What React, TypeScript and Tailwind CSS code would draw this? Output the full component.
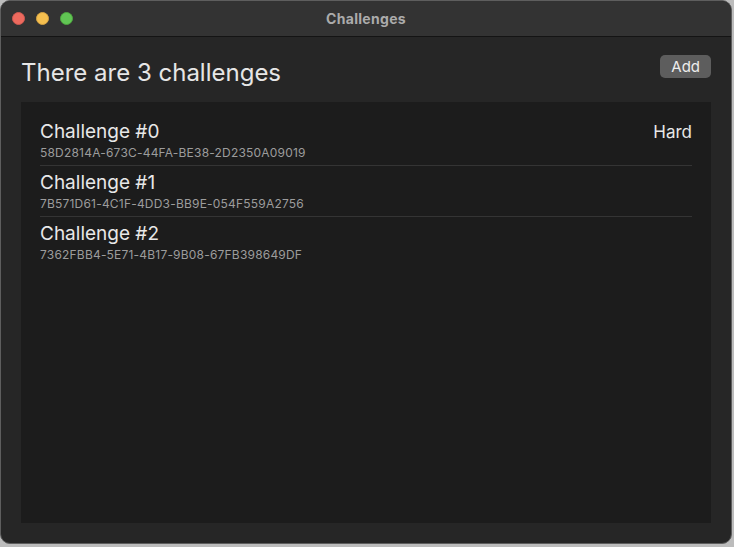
const challenges = [
  { name: "Challenge #0", id: "58D2814A-673C-44FA-BE38-2D2350A09019", level: "Hard" },
  { name: "Challenge #1", id: "7B571D61-4C1F-4DD3-BB9E-054F559A2756" },
  { name: "Challenge #2", id: "7362FBB4-5E71-4B17-9B08-67FB398649DF" },
];

function TrafficLights() {
  return (
    <div className="flex items-center gap-[11px] pl-[11px]">
      <span className="h-[13px] w-[13px] rounded-full border border-[#d05a52] bg-[#ed6a5e]" />
      <span className="h-[13px] w-[13px] rounded-full border border-[#d6a444] bg-[#f5bf4f]" />
      <span className="h-[13px] w-[13px] rounded-full border border-[#4ea73f] bg-[#61c554]" />
    </div>
  );
}

export default function App() {
  return (
    <div
      className="h-[547px] w-[734px] bg-[#bcbcbc] pr-[2px] pb-[3px]"
      style={{ fontFamily: "Inter, 'Noto Sans', sans-serif" }}
    >
      <div className="flex h-full w-full flex-col overflow-hidden rounded-[10px] border border-[#5e5e5e] bg-[#262626]">
        <div className="relative flex h-[36px] shrink-0 items-center border-b border-[#141414] bg-[#333333]">
          <TrafficLights />
          <div className="absolute inset-0 flex items-center justify-center text-[14px] font-bold tracking-[0.3px] text-[#ababab]">
            Challenges
          </div>
        </div>

        <div className="flex flex-1 flex-col px-5 pb-5">
          <div className="flex items-start justify-between pt-[18px] pb-[11px]">
            <h1 className="text-[24px] leading-[36px] text-[#e6e6e6]">
              There are 3 challenges
            </h1>
            <button
              type="button"
              className="rounded-[5px] bg-[#5d5d5d] px-[11px] py-[2px] text-[15px] leading-[19px] text-[#ececec]"
            >
              Add
            </button>
          </div>

          <div className="flex-1 bg-[#1c1c1c] px-[19px] pt-[13px]">
            {challenges.map((c, i) => (
              <div
                key={c.id}
                className={
                  "flex items-start justify-between pt-[5px] pb-[5px] " +
                  (i < challenges.length - 1 ? "border-b border-[#343434]" : "")
                }
              >
                <div className="flex flex-col gap-[2px]">
                  <div className="text-[19px] leading-[24px] text-[#e8e8e8]">{c.name}</div>
                  <div className="text-[12px] leading-[14px] tracking-[0.2px] text-[#9c9c9c]">
                    {c.id}
                  </div>
                </div>
                {c.level ? (
                  <div className="text-[17px] leading-[24px] text-[#e8e8e8]">{c.level}</div>
                ) : null}
              </div>
            ))}
          </div>
        </div>
      </div>
    </div>
  );
}
